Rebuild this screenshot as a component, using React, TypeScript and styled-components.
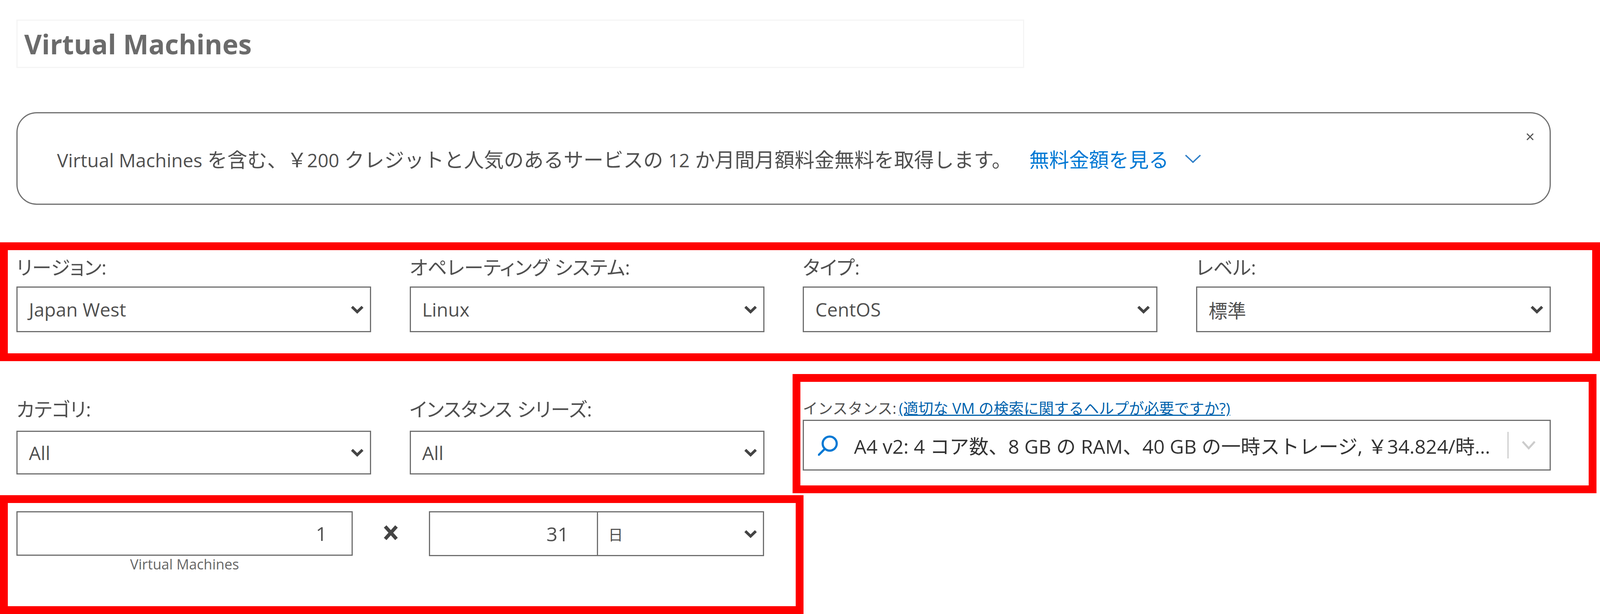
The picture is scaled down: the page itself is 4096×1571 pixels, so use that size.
import React from 'react';
import styled, { createGlobalStyle } from 'styled-components';

const FONT = `"Open Sans", "Noto Sans CJK JP", sans-serif`;
const LINE = '#6f6f6f';
const RED = '#ff0000';

const GlobalStyle = createGlobalStyle`
  html, body {
    margin: 0;
    padding: 0;
    background: #fff;
  }
  * {
    box-sizing: border-box;
  }
`;

const Page = styled.div`
  position: relative;
  width: 4096px;
  height: 1571px;
  overflow: hidden;
  padding: 50px 0 0 42px;
  font-family: ${FONT};
  color: #505050;
`;

const TitleBox = styled.div`
  width: 2580px;
  height: 124px;
  display: flex;
  align-items: center;
  padding-left: 17px;
  border: 3px solid #f5f5f5;
`;

const Title = styled.h1`
  margin: 0;
  font-size: 69px;
  font-weight: 700;
  color: #6b6b6b;
`;

const Notice = styled.div`
  position: relative;
  width: 3928px;
  height: 237px;
  margin-top: 113px;
  padding: 0 0 0 101px;
  display: flex;
  align-items: center;
  border: 3px solid ${LINE};
  border-radius: 52px;
  font-size: 51px;
  white-space: pre;
`;

const Latin = styled.span`
  font-size: 48px;
`;

const NoticeLink = styled.a`
  display: inline-flex;
  align-items: center;
  gap: 41px;
  margin-left: 45px;
  color: #0078d4;
`;

const CloseIcon = styled.svg`
  position: absolute;
  top: 50px;
  right: 38px;
  width: 24px;
  height: 20px;
`;

const SelectGrid = styled.div<{ $top: number }>`
  position: relative;
  display: grid;
  grid-template-columns: repeat(4, 908px);
  column-gap: 98.67px;
  width: 3928px;
  margin-top: ${(p) => p.$top}px;
`;

const Field = styled.div`
  position: relative;
  display: flex;
  flex-direction: column;
`;

const WideField = styled(Field)`
  grid-column: span 2;
  width: 1915px;
`;

const FieldLabel = styled.label<{ $height: number }>`
  height: ${(p) => p.$height}px;
  font-size: 49.6px;
  line-height: 38px;
  font-feature-settings: "palt";
  color: #505050;
`;

const InstanceLabel = styled.div`
  height: 46px;
  font-size: 38.5px;
  line-height: 32px;
  color: #505050;
`;

const HelpLink = styled.a`
  margin-left: 6px;
  color: #0062ad;
  text-decoration: underline;
`;

const Select = styled.div<{ $height: number }>`
  display: flex;
  align-items: center;
  justify-content: space-between;
  height: ${(p) => p.$height}px;
  padding: 0 15px 0 29px;
  border: 3px solid ${LINE};
  font-size: 48px;
  color: #505050;
`;

const ComboBox = styled.div`
  display: flex;
  align-items: center;
  height: 130px;
  padding-left: 36px;
  border: 3px solid ${LINE};
  color: #333;
`;

const ComboText = styled.div`
  width: 1673px;
  margin-left: 40px;
  font-size: 50px;
  white-space: nowrap;
`;

const ComboDivider = styled.div`
  width: 3px;
  height: 68px;
  background: #ccc;
`;

const ComboCaret = styled.svg`
  width: 37px;
  height: 24px;
  margin-left: 33px;
`;

const Caret = styled.svg`
  width: 35px;
  height: 24px;
  flex: none;
`;

const Magnifier = styled.svg`
  width: 52px;
  height: 53px;
  flex: none;
`;

const CountRow = styled.div`
  position: relative;
  display: flex;
  width: 1914px;
  height: 154px;
  margin-top: 94px;
`;

const CountColumn = styled.div`
  display: flex;
  flex-direction: column;
  width: 861px;
`;

const NumberBox = styled.div`
  display: flex;
  align-items: center;
  justify-content: flex-end;
  height: 115px;
  padding-right: 63px;
  border: 3px solid ${LINE};
  font-size: 50px;
`;

const Caption = styled.div`
  margin-top: 4px;
  text-align: center;
  font-size: 36px;
  line-height: 36px;
  color: #666;
`;

const Times = styled.svg`
  width: 41px;
  height: 40px;
  margin: 35px 77px 0 77px;
  flex: none;
`;

const DurationBox = styled.div`
  display: flex;
  height: 115px;
  width: 858px;
  border: 3px solid ${LINE};
`;

const DurationValue = styled.div`
  display: flex;
  align-items: center;
  justify-content: flex-end;
  width: 430px;
  padding-right: 72px;
  border-right: 3px solid ${LINE};
  font-size: 50px;
`;

const DurationUnit = styled.div`
  flex: 1;
  display: flex;
  align-items: center;
  justify-content: space-between;
  padding: 0 14px 0 26px;
  font-size: 38px;
`;

// red annotation drawn over the screenshot, placed relative to what it marks
const Marker = styled.div<{ $top: number; $right: number; $bottom: number; $left: number }>`
  position: absolute;
  top: ${(p) => p.$top}px;
  right: ${(p) => p.$right}px;
  bottom: ${(p) => p.$bottom}px;
  left: ${(p) => p.$left}px;
  border: 20px solid ${RED};
  pointer-events: none;
`;

const SelectCaret = () => (
  <Caret viewBox="0 0 35 24">
    <polyline points="4,5 17.5,18 31,5" fill="none" stroke="#444" strokeWidth="7" />
  </Caret>
);

const SearchIcon = () => (
  <Magnifier viewBox="0 0 52 53">
    <circle cx="30" cy="22" r="18" fill="none" stroke="#0078d4" strokeWidth="5.5" />
    <line x1="17" y1="36" x2="2" y2="51" stroke="#0078d4" strokeWidth="5.5" strokeLinecap="round" />
  </Magnifier>
);

const SelectField = (props: { label: string; value: string; labelHeight: number; height: number }) => (
  <Field>
    <FieldLabel $height={props.labelHeight}>{props.label}</FieldLabel>
    <Select $height={props.height}>
      {props.value}
      <SelectCaret />
    </Select>
  </Field>
);

export default function App() {
  return (
    <Page>
      <GlobalStyle />
      <TitleBox>
        <Title>Virtual Machines</Title>
      </TitleBox>

      <Notice>
        <span>
          <Latin>Virtual Machines</Latin> を含む、￥<Latin>200</Latin> クレジットと人気のあるサービスの <Latin>12</Latin> か月間月額料金無料を取得します。
        </span>
        <NoticeLink>
          無料金額を見る
          <svg width="42" height="24" viewBox="0 0 42 24">
            <polyline points="2,3 21,21 40,3" fill="none" stroke="#2f7fc8" strokeWidth="3.5" />
          </svg>
        </NoticeLink>
        <CloseIcon viewBox="0 0 24 20">
          <path d="M4 2 L20 18 M20 2 L4 18" stroke="#555" strokeWidth="3" />
        </CloseIcon>
      </Notice>

      <SelectGrid $top={141}>
        <SelectField label="リージョン:" value="Japan West" labelHeight={68} height={117} />
        <SelectField label="オペレーティング システム:" value="Linux" labelHeight={68} height={117} />
        <SelectField label="タイプ:" value="CentOS" labelHeight={68} height={117} />
        <SelectField label="レベル:" value="標準" labelHeight={68} height={117} />
        <Marker $top={-45} $right={-126} $bottom={-74} $left={-42} />
      </SelectGrid>

      <SelectGrid $top={178}>
        <SelectField label="カテゴリ:" value="All" labelHeight={74} height={112} />
        <SelectField label="インスタンス シリーズ:" value="All" labelHeight={74} height={112} />
        <WideField>
          <InstanceLabel>
            インスタンス:
            <HelpLink>(適切な VM の検索に関するヘルプが必要ですか?)</HelpLink>
          </InstanceLabel>
          <ComboBox>
            <SearchIcon />
            <ComboText>A4 v2: 4 コア数、8 GB の RAM、40 GB の一時ストレージ, ￥34.824/時...</ComboText>
            <ComboDivider />
            <ComboCaret viewBox="0 0 37 24">
              <polyline points="3,3 18.5,20 34,3" fill="none" stroke="#ccc" strokeWidth="5" />
            </ComboCaret>
          </ComboBox>
          <Marker $top={-71} $right={-117} $bottom={-48} $left={-26} />
        </WideField>
      </SelectGrid>

      <CountRow>
        <CountColumn>
          <NumberBox>1</NumberBox>
          <Caption>Virtual Machines</Caption>
        </CountColumn>
        <Times viewBox="0 0 41 40">
          <path d="M6 4 L35 36 M35 4 L6 36" stroke="#444" strokeWidth="9" />
        </Times>
        <DurationBox>
          <DurationValue>31</DurationValue>
          <DurationUnit>
            日
            <SelectCaret />
          </DurationUnit>
        </DurationBox>
        <Marker $top={-41} $right={-101} $bottom={-109} $left={-42} />
      </CountRow>
    </Page>
  );
}
